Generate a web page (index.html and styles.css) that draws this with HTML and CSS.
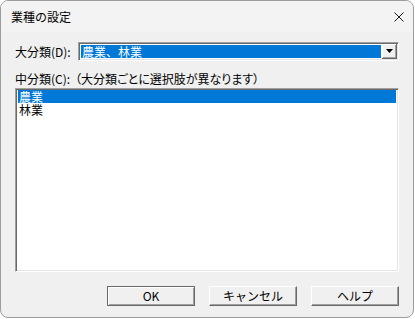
FILE: index.html
```html
<!DOCTYPE html>
<html lang="ja">
<head>
    <meta charset="UTF-8">
    <title>業種の設定</title>
    <link rel="stylesheet" href="styles.css">
</head>
<body>
    <div class="window">
        <!-- タイトルバー -->
        <div class="titlebar">
            <span class="title">業種の設定</span>
            <span class="close">
                <svg width="10" height="10" viewBox="0 0 10 10">
                    <path d="M0.5 0.5 L9.5 9.5 M9.5 0.5 L0.5 9.5" stroke="#1b1b1b" stroke-width="1" fill="none"/>
                </svg>
            </span>
        </div>

        <div class="content">
            <div class="row">
                <span class="label">大分類(D):</span>
                <div class="combo">
                    <div class="combo-field"><span class="combo-value">農業、林業</span></div>
                    <div class="combo-button">
                        <svg width="7" height="4" viewBox="0 0 7 4"><path d="M0 0 H7 L3.5 4 Z" fill="#000"/></svg>
                    </div>
                </div>
            </div>

            <div class="label sub">中分類(C):<span class="note">（大分類ごとに選択肢が異なります）</span></div>

            <div class="listbox">
                <div class="item selected">農業</div>
                <div class="item">林業</div>
            </div>

            <div class="buttons">
                <button class="btn default">OK</button>
                <button class="btn">キャンセル</button>
                <button class="btn">ヘルプ</button>
            </div>
        </div>
    </div>
</body>
</html>
```

FILE: styles.css
```css
:root {
    --face: #f0f0f0;
    --title-bg: #f3f3f3;
    --select: #0078d7;
    --shadow: #a0a0a0;
    --dark: #696969;
    --light: #e3e3e3;
}

body {
    margin: 0;
    background: #ffffff;
    font-family: "Noto Sans CJK JP", sans-serif;
    font-size: 12px;
    color: #000;
}

.window {
    width: 412px;
    height: 316px;
    border: 1px solid #9c9c9c;
    border-radius: 8px;
    background: var(--face);
    overflow: hidden;
    display: flex;
    flex-direction: column;
}

/* --- タイトルバー --- */
.titlebar {
    height: 31px;
    flex-shrink: 0;
    background: var(--title-bg);
    display: flex;
    align-items: center;
    justify-content: space-between;
    padding: 0 9px 0 10px;
}

.title {
    font-size: 12px;
    line-height: 14px;
}

.close {
    display: flex;
    width: 10px;
    height: 10px;
}

/* --- 本体 --- */
.content {
    padding: 10px 14px 0 14px;
    display: flex;
    flex-direction: column;
}

.row {
    display: flex;
    align-items: center;
    height: 19px;
}

.label {
    line-height: 14px;
    white-space: nowrap;
    font-feature-settings: "palt";
}

.row .label {
    width: 63px;
}

.sub {
    margin-top: 11px;
}

.note {
    margin-left: 5px;
}

.combo {
    flex: 1;
    height: 15px;
    display: flex;
    border: 1px solid;
    border-color: var(--shadow) #fff #fff var(--shadow);
    box-shadow: inset 1px 1px 0 var(--dark), inset -1px -1px 0 var(--light);
    padding: 1px;
    background: #fff;
}

.combo-field {
    flex: 1;
    padding: 1px;
    display: flex;
}

.combo-value {
    flex: 1;
    background: var(--select);
    color: #fff;
    line-height: 13px;
    padding-left: 1px;
}

.combo-button {
    width: 15px;
    display: flex;
    align-items: center;
    justify-content: center;
    background: var(--face);
    border-right: 1px solid var(--dark);
    border-bottom: 1px solid var(--dark);
    box-shadow: inset 1px 1px 0 #fff, inset -1px -1px 0 var(--shadow);
    box-sizing: border-box;
}

.listbox {
    margin-top: 2px;
    height: 180px;
    background: #fff;
    border: 1px solid;
    border-color: var(--shadow) #fff #fff var(--shadow);
    box-shadow: inset 1px 1px 0 var(--dark), inset -1px -1px 0 var(--light);
    padding: 1px 2px 1px 2px;
}

.item {
    height: 13px;
    line-height: 13px;
    padding-left: 1px;
}

.item.selected {
    background: var(--select);
    color: #fff;
}

/* --- ボタン --- */
.buttons {
    margin-top: 14px;
    display: flex;
    justify-content: flex-end;
    gap: 14px;
}

.btn {
    width: 88px;
    height: 20px;
    padding: 0;
    font-family: inherit;
    font-size: 12px;
    color: #000;
    background: var(--face);
    border: 1px solid;
    border-color: #fff var(--dark) var(--dark) #fff;
    box-shadow: inset -1px -1px 0 var(--shadow);
    border-radius: 0;
    line-height: 16px;
}

.btn.default {
    border-color: var(--dark);
    box-shadow: inset 1px 1px 0 #fff, inset -1px -1px 0 var(--shadow);
}
```
